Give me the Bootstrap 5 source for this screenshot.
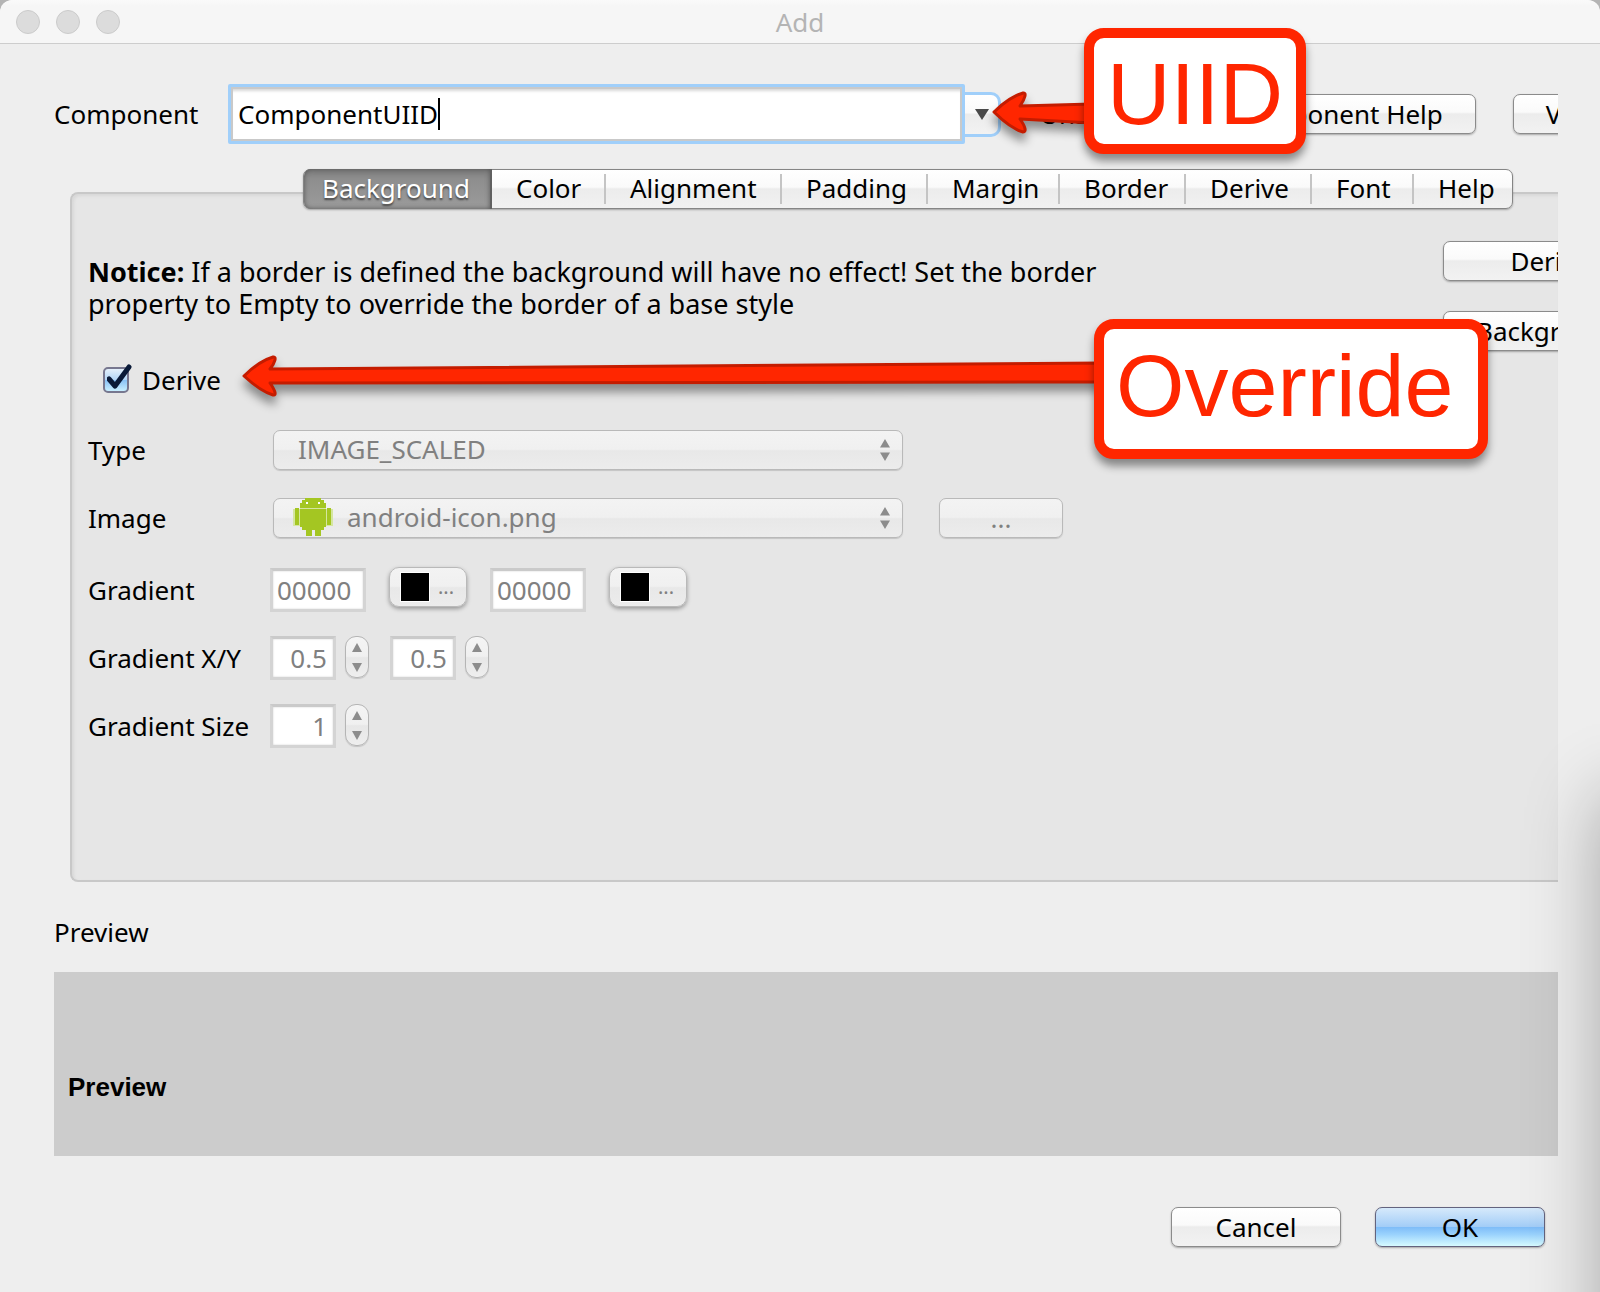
<!DOCTYPE html>
<html lang="en">
<head>
<meta charset="utf-8">
<meta name="viewport" content="width=device-width, initial-scale=1">
<title>Add</title>
<link href="https://cdn.jsdelivr.net/npm/bootstrap@5.3.0/dist/css/bootstrap.min.css" rel="stylesheet">
<style>
body { font: 26px/32px "Noto Sans", sans-serif; color: #000; background: #b4b4b4; }
.dialog { min-height: 100vh; background: #eee; border-radius: 12px 12px 0 0; }
.titlebar { height: 44px; background: linear-gradient(#fafafa, #f6f6f6 6px); border-bottom: 1px solid #cdcdcd; border-radius: 12px 12px 0 0; color: #b4b4b4; }
.lights { left: 16px; gap: 16px; }
.light { width: 24px; height: 24px; border-radius: 50%; background: #dcdcdc; border: 1px solid #cbcbcb; }
.content { padding: 40px 42px 45px 54px; }
.clip { overflow: clip; overflow-clip-margin: 0; }

.btn-aqua { --bs-btn-font-size: 26px; --bs-btn-line-height: 32px; --bs-btn-padding-y: 2px; --bs-btn-padding-x: 32px; --bs-btn-color: #000; --bs-btn-border-radius: 7px;
  height: 40px; border: 1px solid #8b8b8b; background: linear-gradient(#fff, #fafafa 45%, #ececec 50%, #f2f2f2); box-shadow: 0 1px 2px rgba(0,0,0,.3); white-space: nowrap; flex-shrink: 0; }
.btn-default { border-color: #63637e; background: linear-gradient(#d6e9fb, #a3cdf7 49%, #7fbdf8 51%, #9bd3fd 70%, #d6fbff); }
.btn-aqua:disabled { opacity: 1; color: #808080; border-color: #b9b9b9; background: linear-gradient(#f3f3f3, #f0f0f0 48%, #e8e8e8 52%, #ececec); box-shadow: 0 1px 1px rgba(0,0,0,.15); }

.component-label { width: 174px; flex-shrink: 0; }
.combo-box { width: 737px; flex-shrink: 0; }
.combo-text { width: 100%; height: 60px; display: block; padding: 0 7px; font-size: 26px; color: #000; border: 3px solid #a0cffa; border-radius: 2px; background: #fff; outline: 2px solid #c9c9c9; outline-offset: -5px; box-shadow: inset 0 4px 3px #d8d8d8; }
.text-cursor { left: 210px; top: 14px; width: 2px; height: 32px; background: #000; }
.combo-arrow { width: 36px; height: 45px; flex-shrink: 0; border: 3px solid #a0cffa; border-left: 0; border-radius: 0 10px 10px 0; background: linear-gradient(#fff, #fafafa 45%, #ececec 50%, #f2f2f2); }
.state-label { width: 201px; padding-left: 39px; flex-shrink: 0; }
.view-btn { margin-left: 37px; }

.tabs-row { display: grid; grid-template-columns: 188fr 114fr 176fr 146fr 132fr 126fr 126fr 102fr 98fr; width: 1210px; height: 40px; margin: 25px 0 -17px 249px; position: relative; z-index: 1;
  border: 1px solid #858585; border-radius: 7px; background: linear-gradient(#fff, #fafafa 45%, #ececec 50%, #f1f1f1); box-shadow: 0 1px 2px rgba(0,0,0,.3); }
.tab-item { padding: 2px 0 4px 24px; border: 0; background: none; text-align: left; line-height: 32px; white-space: nowrap; position: relative; }
.tab-item + .tab-item::after { content: ""; position: absolute; right: 0; top: 4px; bottom: 4px; width: 2px; background: #c4c4c4; }
.tab-item:last-child::after { display: none; }
.tab-item.active { margin: -1px 0; padding: 3px 0 5px 18px; color: #fff; border-right: 2px solid #606060; border-radius: 7px 0 0 7px; background: linear-gradient(#7a7a7a, #8e8e8e 25%, #9b9b9b); box-shadow: inset 0 0 5px #555; text-shadow: 0 2px 2px #444; }

.panel { min-height: 690px; margin-left: 16px; padding-left: 16px; background: #e6e6e6; border: 2px solid #c8c8c8; border-right: 0; border-radius: 8px 0 0 8px; box-shadow: inset 2px 2px 3px #d8d8d8; }
.settings { padding-top: 62px; }
.notice { margin-bottom: 26px; font-size: 27px; }
.side-buttons { width: 115px; flex-shrink: 0; padding-top: 47px; }
.side-buttons > div { width: max-content; gap: 30px; }
.setting { height: 68px; }
.derive-row { margin-bottom: 2px; }
.setting-label { width: 182px; flex-shrink: 0; }
.derive-check { width: 26px; height: 26px; margin: 0 13px 0 15px; appearance: none; border: 2px solid #77778f; border-radius: 5px; background: linear-gradient(#e4f0fb, #b4d6f7 48%, #8ac2f6 52%, #c8efff); }
.derive-tick { left: 19px; top: 18px; }
.popup { width: 630px; margin-left: 3px; }
.popup-select { height: 40px; padding: 0 40px 2px 24px; font-size: 26px; line-height: 32px; border: 1px solid #b9b9b9; border-radius: 7px; box-shadow: 0 1px 1px rgba(0,0,0,.15); }
.popup-select:disabled { color: #808080; opacity: 1; background: linear-gradient(#f3f3f3, #f0f0f0 48%, #e8e8e8 52%, #ececec); }
.popup-select.with-icon { padding-left: 73px; }
.popup-arrows { right: 13px; top: 9px; }
.popup-icon { left: 20px; top: 0; }
.browse { width: 124px; margin-left: 36px; }
.field { height: 44px; padding: 0 6px; font-size: 26px; line-height: 32px; color: #808080; background: #fff; border: 3px solid #d4d4d4; border-top-color: #cacaca; border-radius: 0; box-shadow: inset 0 0 2px #ccc; }
.field:disabled { color: #808080; background: #fff; opacity: 1; }
.color-field { width: 96px; padding: 0 4px; }
.number-field { width: 66px; text-align: right; appearance: textfield; }
.number-field::-webkit-inner-spin-button { display: none; }
.color-btn { --bs-btn-padding-x: 10px; width: 78px; margin: -6px 23px 0; border-radius: 10px; gap: 8px; }
.btn-aqua.color-btn:disabled { box-shadow: 0 2px 4px rgba(0,0,0,.35); font-size: 20px; }
.swatch { width: 30px; height: 30px; background: #000; border: 1px solid #fff; }
.stepper { width: 24px; height: 42px; margin: -2px 21px 0 9px; border: 1px solid #b5b5b5; border-radius: 11px; background: linear-gradient(#f4f4f4, #f0f0f0 48%, #e7e7e7 52%, #eee); box-shadow: 0 1px 1px rgba(0,0,0,.15); }
.stepper button { height: 20px; padding: 0; border: 0; background: none; line-height: 0; }

.preview-label { margin: 34px 0 24px; }
.preview-box { height: 184px; padding: 99px 14px 0; background: #ccc; font-family: "Liberation Sans", Arial, sans-serif; font-weight: 700; }
.actions { margin-top: 51px; padding-right: 13px; gap: 34px; }
.actions .btn-aqua { width: 170px; }

.callout { position: absolute; z-index: 5; border: 10px solid #ff2600; border-radius: 20px; background: #fff; color: #ff2600; font: 88px/100px "Liberation Sans", Arial, sans-serif; box-shadow: 0 7px 9px rgba(0,0,0,.42); }
.callout-uiid { left: 1084px; top: 28px; width: 222px; height: 126px; padding: 6px 0 0 13px; }
.callout-override { left: 1094px; top: 319px; width: 394px; height: 140px; padding: 7px 0 0 12px; }
.arrow { position: absolute; z-index: 4; overflow: visible; filter: drop-shadow(0 8px 5px rgba(0,0,0,.4)); }
.arrow path { fill: #ff2600; stroke: #c41c00; stroke-width: 3; stroke-linejoin: round; }
.arrow-uiid { left: 992px; top: 90px; }
.arrow-override { left: 242px; top: 354px; }
.edge-shade { position: absolute; inset: 0; overflow: hidden; pointer-events: none; z-index: 3; }
.edge-shade::after { content: ""; position: absolute; left: 100%; top: 795px; bottom: -200px; width: 300px; box-shadow: 0 0 70px rgba(0,0,0,.3); }
</style>
<script src="https://cdn.jsdelivr.net/npm/bootstrap@5.3.0/dist/js/bootstrap.bundle.min.js"></script>
</head>
<body>
<div class="dialog position-relative clip">
  <header class="titlebar position-relative d-flex align-items-center justify-content-center">
    <div class="lights position-absolute d-flex"><span class="light"></span><span class="light"></span><span class="light"></span></div>
    <span>Add</span>
  </header>

  <main class="content">
    <div class="clip">
      <div class="d-flex align-items-center">
        <label class="component-label" for="component">Component</label>
        <div class="combo-box position-relative">
          <input class="combo-text" id="component" type="text" value="ComponentUIID">
          <span class="text-cursor position-absolute"></span>
        </div>
        <button class="combo-arrow p-0 d-flex align-items-center justify-content-center" type="button" aria-label="Show components">
          <svg width="14" height="11"><path d="M0 0h14L7 11z" fill="#4a4a4a"/></svg>
        </button>
        <span class="state-label">Unstyled</span>
        <button class="btn btn-aqua" type="button">Component Help</button>
        <button class="btn btn-aqua view-btn" type="button">Video Tutorial</button>
      </div>

      <div class="tabs-row" role="tablist">
        <button class="tab-item active" role="tab" type="button">Background</button>
        <button class="tab-item" role="tab" type="button">Color</button>
        <button class="tab-item" role="tab" type="button">Alignment</button>
        <button class="tab-item" role="tab" type="button">Padding</button>
        <button class="tab-item" role="tab" type="button">Margin</button>
        <button class="tab-item" role="tab" type="button">Border</button>
        <button class="tab-item" role="tab" type="button">Derive</button>
        <button class="tab-item" role="tab" type="button">Font</button>
        <button class="tab-item" role="tab" type="button">Help</button>
      </div>

      <section class="panel d-flex">
        <div class="settings flex-grow-1">
          <p class="notice"><b>Notice:</b> If a border is defined the background will have no effect! Set the border<br>property to Empty to override the border of a base style</p>
          <div class="setting derive-row d-flex align-items-center position-relative">
            <input class="derive-check" id="derive" type="checkbox" checked>
            <svg class="derive-tick position-absolute" width="26" height="26"><path d="M2 15l6 7L22 3" fill="none" stroke="#0a1a38" stroke-width="5" stroke-linecap="round" stroke-linejoin="round"/></svg>
            <label for="derive">Derive</label>
          </div>
          <div class="setting d-flex align-items-center">
            <label class="setting-label" for="type">Type</label>
            <div class="popup position-relative">
              <select class="popup-select form-select" id="type" disabled><option>IMAGE_SCALED</option></select>
              <svg class="popup-arrows position-absolute" width="10" height="22"><path d="M0 8.500L5 0l5 8.500zM0 13.500h10L5 22z" fill="#8c8c8c"/></svg>
            </div>
          </div>
          <div class="setting d-flex align-items-center">
            <label class="setting-label" for="image">Image</label>
            <div class="popup position-relative">
              <select class="popup-select with-icon form-select" id="image" disabled><option>android-icon.png</option></select>
              <svg class="popup-icon position-absolute" width="40" height="38" viewBox="0 0 40 38" shape-rendering="crispEdges">
                <g fill="#d5e6a0"><path d="M0 11h8v17H0zM33 11h7v17h-7zM7 5h26v6H7z"/></g>
                <g fill="#a4c622"><path d="M12 0h16v2h3v3h2v5H7V5h2V2h3zM7 11h26v18h-2v3h-3v6h-6v-6h-3v6h-6v-6H9v-3H7zM2 10h4v17H2zM34 10h4v17h-4z"/></g>
                <path d="M13 4h2v2h-2zM25 4h2v2h-2z" fill="#fff"/>
              </svg>
              <svg class="popup-arrows position-absolute" width="10" height="22"><path d="M0 8.500L5 0l5 8.500zM0 13.500h10L5 22z" fill="#8c8c8c"/></svg>
            </div>
            <button class="btn btn-aqua browse" type="button" disabled>...</button>
          </div>
          <div class="setting d-flex align-items-center mt-1">
            <label class="setting-label" for="start">Gradient</label>
            <input class="field color-field" id="start" type="text" value="00000" disabled>
            <button class="btn btn-aqua color-btn d-flex align-items-center" type="button" aria-label="Pick start colour" disabled><span class="swatch"></span>...</button>
            <input class="field color-field" type="text" value="00000" aria-label="End colour" disabled>
            <button class="btn btn-aqua color-btn d-flex align-items-center" type="button" aria-label="Pick end colour" disabled><span class="swatch"></span>...</button>
          </div>
          <div class="setting d-flex align-items-center">
            <label class="setting-label" for="gx">Gradient X/Y</label>
            <input class="field number-field" id="gx" type="number" step="0.1" value="0.5" disabled>
            <div class="stepper d-flex flex-column">
              <button type="button" aria-label="Increase X" disabled><svg width="10" height="9"><path d="M0 9l5-9 5 9z" fill="#8c8c8c"/></svg></button>
              <button type="button" aria-label="Decrease X" disabled><svg width="10" height="9"><path d="M0 0h10L5 9z" fill="#8c8c8c"/></svg></button>
            </div>
            <input class="field number-field" type="number" step="0.1" value="0.5" aria-label="Gradient Y" disabled>
            <div class="stepper d-flex flex-column">
              <button type="button" aria-label="Increase Y" disabled><svg width="10" height="9"><path d="M0 9l5-9 5 9z" fill="#8c8c8c"/></svg></button>
              <button type="button" aria-label="Decrease Y" disabled><svg width="10" height="9"><path d="M0 0h10L5 9z" fill="#8c8c8c"/></svg></button>
            </div>
          </div>
          <div class="setting d-flex align-items-center">
            <label class="setting-label" for="gsize">Gradient Size</label>
            <input class="field number-field" id="gsize" type="number" value="1" disabled>
            <div class="stepper d-flex flex-column">
              <button type="button" aria-label="Increase size" disabled><svg width="10" height="9"><path d="M0 9l5-9 5 9z" fill="#8c8c8c"/></svg></button>
              <button type="button" aria-label="Decrease size" disabled><svg width="10" height="9"><path d="M0 0h10L5 9z" fill="#8c8c8c"/></svg></button>
            </div>
          </div>
        </div>
        <div class="side-buttons">
          <div class="d-flex flex-column">
            <button class="btn btn-aqua" type="button">Derive Help</button>
            <button class="btn btn-aqua" type="button">Background Help</button>
          </div>
        </div>
      </section>
    </div>

    <div class="preview-label">Preview</div>
    <div class="preview-box">Preview</div>
    <div class="actions d-flex justify-content-end">
      <button class="btn btn-aqua" type="button">Cancel</button>
      <button class="btn btn-aqua btn-default" type="button">OK</button>
    </div>
  </main>

  <div class="edge-shade"></div>
  <svg class="arrow arrow-uiid" width="100" height="44"><path d="M2 22C14 10 24 5 31 3c4-1 2 6-3 13L100 14v31L100 33 28 29c5 7 7 13 3 13C24 40 14 34 2 22z"/></svg>
  <svg class="arrow arrow-override" width="860" height="44"><path d="M2 22C14 10 24 5 31 3c4-1 2 6-3 12L860 9v19L28 29c5 7 7 13 3 12C24 39 14 33 2 22z"/></svg>
  <div class="callout callout-uiid">UIID</div>
  <div class="callout callout-override">Override</div>
</div>
</body>
</html>
